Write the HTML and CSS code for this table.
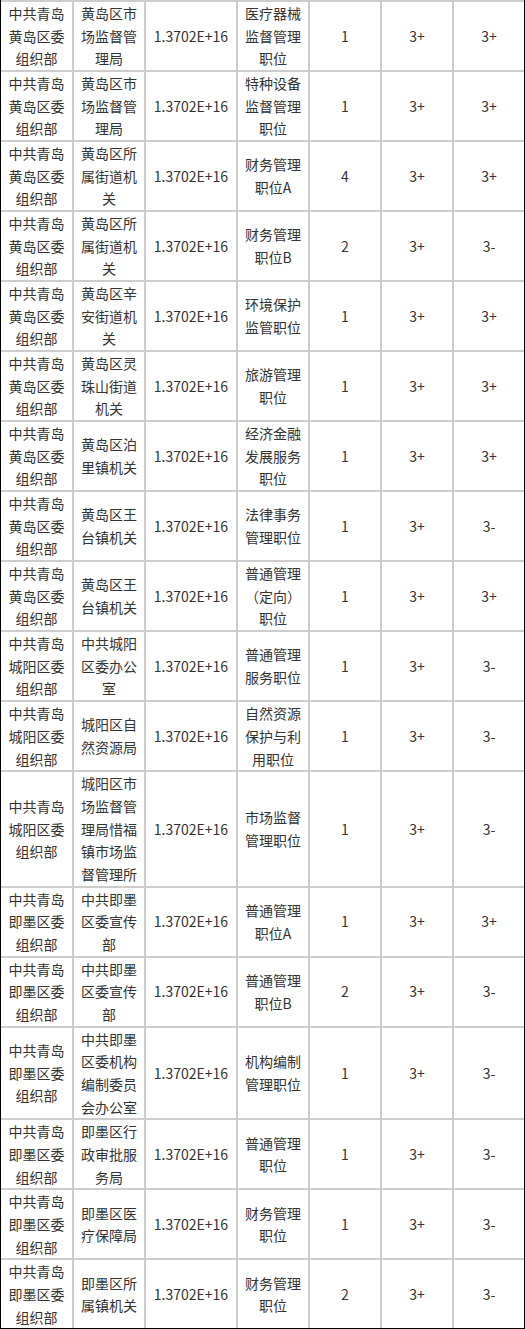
FILE: index.html
```html
<!DOCTYPE html>
<html lang="zh">
<head>
<meta charset="utf-8">
<link rel="stylesheet" href="styles.css">
</head>
<body>
<div class="frame">
<table class="grid">
<colgroup>
<col class="c1"><col class="c2"><col class="c3"><col class="c4"><col class="c5"><col class="c6"><col class="c7">
</colgroup>
<tbody>
<tr><td>中共青岛黄岛区委组织部</td><td>黄岛区市场监督管理局</td><td>1.3702E+16</td><td>医疗器械监督管理职位</td><td>1</td><td>3+</td><td>3+</td></tr>
<tr><td>中共青岛黄岛区委组织部</td><td>黄岛区市场监督管理局</td><td>1.3702E+16</td><td>特种设备监督管理职位</td><td>1</td><td>3+</td><td>3+</td></tr>
<tr><td>中共青岛黄岛区委组织部</td><td>黄岛区所属街道机关</td><td>1.3702E+16</td><td>财务管理职位A</td><td>4</td><td>3+</td><td>3+</td></tr>
<tr><td>中共青岛黄岛区委组织部</td><td>黄岛区所属街道机关</td><td>1.3702E+16</td><td>财务管理职位B</td><td>2</td><td>3+</td><td>3-</td></tr>
<tr><td>中共青岛黄岛区委组织部</td><td>黄岛区辛安街道机关</td><td>1.3702E+16</td><td>环境保护监管职位</td><td>1</td><td>3+</td><td>3+</td></tr>
<tr><td>中共青岛黄岛区委组织部</td><td>黄岛区灵珠山街道机关</td><td>1.3702E+16</td><td>旅游管理职位</td><td>1</td><td>3+</td><td>3+</td></tr>
<tr><td>中共青岛黄岛区委组织部</td><td>黄岛区泊里镇机关</td><td>1.3702E+16</td><td>经济金融发展服务职位</td><td>1</td><td>3+</td><td>3+</td></tr>
<tr><td>中共青岛黄岛区委组织部</td><td>黄岛区王台镇机关</td><td>1.3702E+16</td><td>法律事务管理职位</td><td>1</td><td>3+</td><td>3-</td></tr>
<tr><td>中共青岛黄岛区委组织部</td><td>黄岛区王台镇机关</td><td>1.3702E+16</td><td>普通管理（定向）职位</td><td>1</td><td>3+</td><td>3+</td></tr>
<tr><td>中共青岛城阳区委组织部</td><td>中共城阳区委办公室</td><td>1.3702E+16</td><td>普通管理服务职位</td><td>1</td><td>3+</td><td>3-</td></tr>
<tr><td>中共青岛城阳区委组织部</td><td>城阳区自然资源局</td><td>1.3702E+16</td><td>自然资源保护与利用职位</td><td>1</td><td>3+</td><td>3-</td></tr>
<tr><td>中共青岛城阳区委组织部</td><td>城阳区市场监督管理局惜福镇市场监督管理所</td><td>1.3702E+16</td><td>市场监督管理职位</td><td>1</td><td>3+</td><td>3-</td></tr>
<tr><td>中共青岛即墨区委组织部</td><td>中共即墨区委宣传部</td><td>1.3702E+16</td><td>普通管理职位A</td><td>1</td><td>3+</td><td>3+</td></tr>
<tr><td>中共青岛即墨区委组织部</td><td>中共即墨区委宣传部</td><td>1.3702E+16</td><td>普通管理职位B</td><td>2</td><td>3+</td><td>3-</td></tr>
<tr><td>中共青岛即墨区委组织部</td><td>中共即墨区委机构编制委员会办公室</td><td>1.3702E+16</td><td>机构编制管理职位</td><td>1</td><td>3+</td><td>3-</td></tr>
<tr><td>中共青岛即墨区委组织部</td><td>即墨区行政审批服务局</td><td>1.3702E+16</td><td>普通管理职位</td><td>1</td><td>3+</td><td>3-</td></tr>
<tr><td>中共青岛即墨区委组织部</td><td>即墨区医疗保障局</td><td>1.3702E+16</td><td>财务管理职位</td><td>1</td><td>3+</td><td>3-</td></tr>
<tr><td>中共青岛即墨区委组织部</td><td>即墨区所属镇机关</td><td>1.3702E+16</td><td>财务管理职位</td><td>2</td><td>3+</td><td>3-</td></tr>
</tbody>
</table>
</div>
</body>
</html>
```

FILE: styles.css
```css
html, body {
  margin: 0;
  padding: 0;
  background: #fff;
}
.frame {
  width: 523px;
  border-left: 1px solid #000;
  border-right: 1px solid #000;
  border-bottom: 1px solid #000;
}
.grid {
  width: 523px;
  border-collapse: collapse;
  table-layout: fixed;
  font-family: "Microsoft YaHei", "Noto Sans CJK SC", sans-serif;
  font-size: 14px;
  line-height: 22.67px;
  color: #333;
}
.c1 { width: 72px; }
.c2 { width: 72px; }
.c3 { width: 92px; }
.c4 { width: 72px; }
.c5 { width: 72px; }
.c6 { width: 72px; }
.c7 { width: 71px; }
.grid td {
  border: 2px solid #ccc;
  padding: 0 7px;
  text-align: center;
  vertical-align: middle;
  word-break: break-all;
}
.grid td:first-child { border-left: none; }
.grid td:last-child { border-right: none; }
.grid tr:last-child td { border-bottom: none; }
```
